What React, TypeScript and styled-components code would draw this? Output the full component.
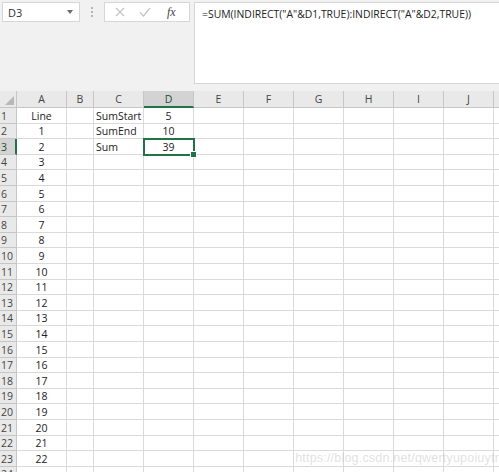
import React from "react";
import styled, { createGlobalStyle } from "styled-components";

const GREEN = "#217346";
const GRID = "#dadada";
const HEAD_LINE = "#c6c6c6";

const COLS = [
  { id: "A", width: 50 },
  { id: "B", width: 27 },
  { id: "C", width: 50 },
  { id: "D", width: 50 },
  { id: "E", width: 50 },
  { id: "F", width: 50 },
  { id: "G", width: 50 },
  { id: "H", width: 50 },
  { id: "I", width: 50 },
  { id: "J", width: 50 },
  { id: "K", width: 50 },
];

const ROW_HEADER = 17;
const ROW_COUNT = 24;

type Align = "left" | "center";

const data: Record<string, { text: string; align: Align }> = {
  A1: { text: "Line", align: "center" },
  C1: { text: "SumStart", align: "left" },
  C2: { text: "SumEnd", align: "left" },
  C3: { text: "Sum", align: "left" },
  D1: { text: "5", align: "center" },
  D2: { text: "10", align: "center" },
  D3: { text: "39", align: "center" },
};
for (let i = 2; i <= 23; i++) {
  data[`A${i}`] = { text: String(i - 1), align: "center" };
}

const rowHeight = (r: number) => (r % 5 === 2 || r % 5 === 4 ? 15 : 16);

const GlobalStyle = createGlobalStyle`
  html, body {
    margin: 0;
    padding: 0;
    background: #ffffff;
  }
  body {
    font-family: "Open Sans", "Liberation Sans", sans-serif;
    overflow: hidden;
  }
`;

const Page = styled.div`
  width: 499px;
  height: 472px;
  overflow: hidden;
  background: #f1f1f1;
  display: flex;
  flex-direction: column;
  position: relative;
`;

const TopBar = styled.div`
  display: flex;
  align-items: flex-start;
  padding: 2px 0 0 2px;
  height: 91px;
  flex-shrink: 0;
  box-sizing: border-box;
`;

const NameBox = styled.div`
  width: 78px;
  height: 20px;
  box-sizing: border-box;
  background: #fff;
  border: 1px solid #d6d6d6;
  display: flex;
  align-items: center;
  justify-content: space-between;
  padding: 0 6px 0 5px;
  font-size: 11px;
  color: #333;
`;

const DropArrow = styled.span`
  width: 0;
  height: 0;
  border-left: 3px solid transparent;
  border-right: 3px solid transparent;
  border-top: 4px solid #6a6a6a;
`;

const Dots = styled.div`
  width: 24px;
  height: 20px;
  display: flex;
  flex-direction: column;
  align-items: center;
  justify-content: center;
  gap: 2px;
  & > span {
    width: 2px;
    height: 2px;
    background: #b5b5b5;
  }
`;

const ButtonBox = styled.div`
  width: 86px;
  height: 20px;
  box-sizing: border-box;
  background: #fff;
  border: 1px solid #d6d6d6;
  display: flex;
  align-items: center;
  padding: 0 6px 0 10px;
  gap: 14px;
`;

const Fx = styled.span`
  font-family: "Liberation Serif", serif;
  font-style: italic;
  font-size: 12px;
  color: #444;
  margin-left: 2px;
`;

const FormulaBox = styled.div`
  margin-left: 4px;
  flex: 1;
  height: 82px;
  box-sizing: border-box;
  background: #fff;
  border: 1px solid #d6d6d6;
  border-right: none;
  padding: 4px 0 0 7px;
  font-size: 10.4px;
  color: #222;
  white-space: nowrap;
  overflow: hidden;
`;

const Sheet = styled.div`
  display: grid;
  grid-template-columns: ${ROW_HEADER}px ${COLS.map((c) => `${c.width}px`).join(" ")};
  background: #fff;
`;

const Corner = styled.div`
  height: 17px;
  box-sizing: border-box;
  background: #e9e9e9;
  border-right: 1px solid ${HEAD_LINE};
  border-bottom: 1px solid ${HEAD_LINE};
  position: relative;
  &::after {
    content: "";
    position: absolute;
    right: 2px;
    bottom: 2px;
    width: 0;
    height: 0;
    border-left: 9px solid transparent;
    border-bottom: 9px solid #b8b8b8;
  }
`;

const ColHead = styled.div<{ $active: boolean }>`
  height: 17px;
  box-sizing: border-box;
  background: ${({ $active }) => ($active ? "#d3d3d3" : "#e9e9e9")};
  border-right: 1px solid ${HEAD_LINE};
  border-bottom: ${({ $active }) =>
    $active ? `2px solid ${GREEN}` : `1px solid ${HEAD_LINE}`};
  display: flex;
  align-items: center;
  justify-content: center;
  font-size: 10.5px;
  color: ${({ $active }) => ($active ? "#1e4e30" : "#444")};
`;

const RowHead = styled.div<{ $active: boolean; $h: number }>`
  height: ${({ $h }) => $h}px;
  box-sizing: border-box;
  background: ${({ $active }) => ($active ? "#d3d3d3" : "#e9e9e9")};
  border-right: ${({ $active }) =>
    $active ? `2px solid ${GREEN}` : `1px solid ${HEAD_LINE}`};
  border-bottom: 1px solid ${HEAD_LINE};
  display: flex;
  align-items: center;
  padding-left: 1px;
  font-size: 10.5px;
  color: ${({ $active }) => ($active ? "#1e4e30" : "#444")};
`;

const Cell = styled.div<{ $h: number; $align: Align; $selected: boolean }>`
  height: ${({ $h }) => $h}px;
  box-sizing: border-box;
  border-right: 1px solid ${GRID};
  border-bottom: 1px solid ${GRID};
  display: flex;
  align-items: center;
  justify-content: ${({ $align }) => ($align === "center" ? "center" : "flex-start")};
  padding: 0 2px;
  font-size: 10.5px;
  color: #222;
  white-space: nowrap;
  position: relative;
  ${({ $selected }) =>
    $selected &&
    `
    outline: 2px solid ${GREEN};
    outline-offset: -1px;
    z-index: 2;
    &::after {
      content: "";
      position: absolute;
      right: -4px;
      bottom: -4px;
      width: 5px;
      height: 5px;
      background: ${GREEN};
      border: 1px solid #fff;
    }
  `}
`;

const Watermark = styled.div`
  position: absolute;
  right: 0;
  bottom: 7px;
  font-family: "Liberation Sans", sans-serif;
  font-size: 12.5px;
  color: rgba(200, 200, 200, 0.55);
  letter-spacing: 0.2px;
  pointer-events: none;
`;

const CrossIcon = () => (
  <svg width="10" height="10" viewBox="0 0 10 10">
    <path d="M1 1L9 9M9 1L1 9" stroke="#c4c4c4" strokeWidth="1.2" fill="none" />
  </svg>
);

const CheckIcon = () => (
  <svg width="12" height="10" viewBox="0 0 12 10">
    <path d="M1 5.5L4.5 9L11 1" stroke="#c4c4c4" strokeWidth="1.2" fill="none" />
  </svg>
);

const App = () => {
  const rows = Array.from({ length: ROW_COUNT }, (_, i) => i + 1);

  return (
    <Page>
      <GlobalStyle />
      <TopBar>
        <NameBox>
          <span>D3</span>
          <DropArrow />
        </NameBox>
        <Dots>
          <span />
          <span />
          <span />
        </Dots>
        <ButtonBox>
          <CrossIcon />
          <CheckIcon />
          <Fx>fx</Fx>
        </ButtonBox>
        <FormulaBox>=SUM(INDIRECT("A"&amp;D1,TRUE):INDIRECT("A"&amp;D2,TRUE))</FormulaBox>
      </TopBar>
      <Sheet>
        <Corner />
        {COLS.map((c) => (
          <ColHead key={c.id} $active={c.id === "D"}>
            {c.id}
          </ColHead>
        ))}
        {rows.map((r) => (
          <React.Fragment key={r}>
            <RowHead $active={r === 3} $h={rowHeight(r)}>
              {r}
            </RowHead>
            {COLS.map((c) => {
              const key = `${c.id}${r}`;
              const v = data[key];
              return (
                <Cell
                  key={key}
                  $h={rowHeight(r)}
                  $align={v ? v.align : "left"}
                  $selected={key === "D3"}
                >
                  {v ? v.text : ""}
                </Cell>
              );
            })}
          </React.Fragment>
        ))}
      </Sheet>
      <Watermark>https://blog.csdn.net/qwertyupoiuytr</Watermark>
    </Page>
  );
};

export default App;
